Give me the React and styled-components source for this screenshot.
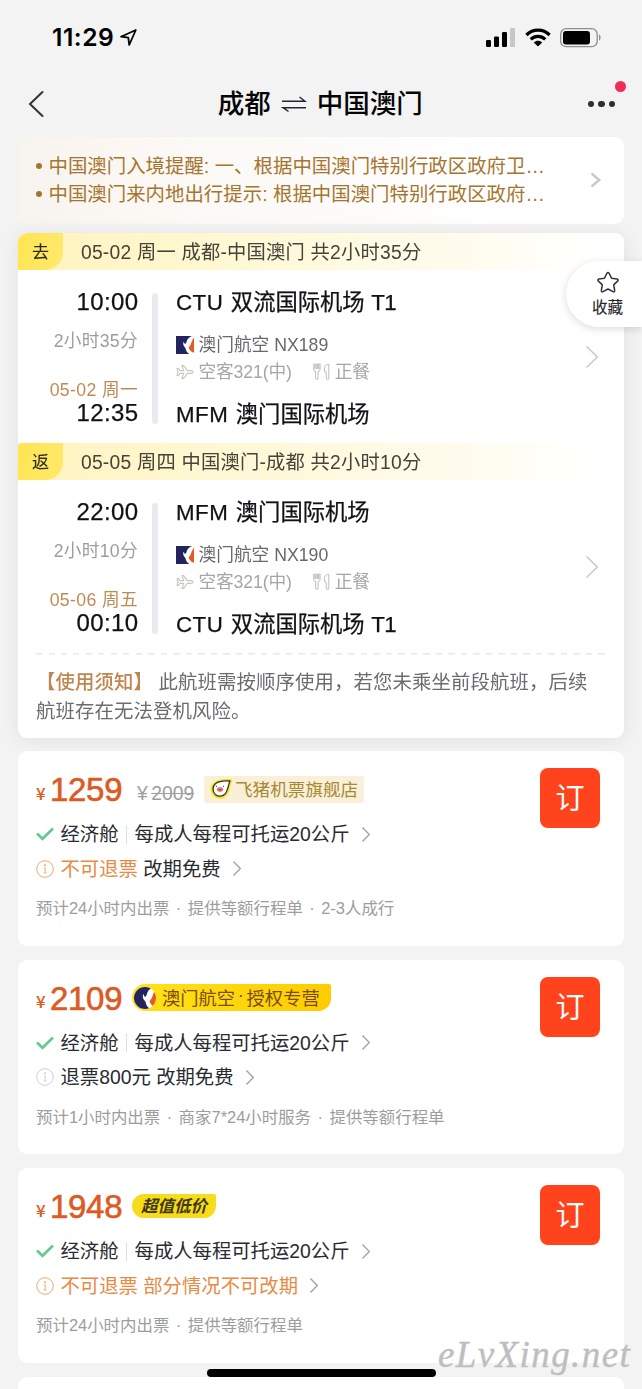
import React from 'react';
import styled, { createGlobalStyle, css } from 'styled-components';

const Global = createGlobalStyle`
  * { box-sizing: border-box; }
  body {
    margin: 0;
    background: #f3f3f3;
    font-family: "Liberation Sans", "Noto Sans CJK SC", sans-serif;
    color: #17191f;
    overflow: hidden;
  }
  svg { display: block; flex: none; overflow: visible; }
`;

const Screen = styled.div`
  position: relative;
  width: 642px;
  height: 1389px;
  overflow: hidden;
  background: #f3f3f3;
  white-space: nowrap;
`;

const StatusBar = styled.header`
  display: flex;
  align-items: center;
  justify-content: space-between;
  height: 74px;
  padding: 0 41px 0 52px;
`;

const Clock = styled.div`
  display: flex;
  align-items: center;
  gap: 6px;
  font: 600 24.6px/30px Inter, sans-serif;
  letter-spacing: 0.5px;
  color: #000;
`;

const StatusIcons = styled.div`
  display: flex;
  align-items: center;
  gap: 9px;
`;

const NavBar = styled.nav`
  display: flex;
  align-items: center;
  justify-content: space-between;
  height: 60px;
  margin-bottom: 3px;
  padding: 0 27px 0 28px;
`;

const Title = styled.h1`
  display: flex;
  align-items: center;
  gap: 10px;
  margin: 0 0 0 9px;
  font-size: 26.5px;
  line-height: 40px;
  font-weight: 500;
  color: #050505;
`;

const More = styled.button`
  position: relative;
  display: flex;
  gap: 4px;
  padding: 0;
  border: 0;
  background: none;
`;

const Dot = styled.i`
  width: 6.5px;
  height: 6.5px;
  border-radius: 50%;
  background: #2f2d31;
`;

const UnreadDot = styled.i`
  position: absolute;
  right: -10.5px;
  top: -19.5px;
  width: 11px;
  height: 11px;
  border-radius: 50%;
  background: #f22d55;
`;

const Alerts = styled.section`
  display: flex;
  align-items: center;
  justify-content: space-between;
  height: 87px;
  margin: 0 18px;
  padding: 0 24px 1px 18px;
  border-radius: 9px;
  background: linear-gradient(90deg, #f7f4ef 0, #fbf8f4 18%, #fdfcfa 60%, #fff 78%);
`;

const AlertList = styled.ul`
  margin: 0;
  padding: 0;
  list-style: none;
`;

const AlertItem = styled.li`
  display: flex;
  align-items: center;
  gap: 6.5px;
  font-size: 19.4px;
  line-height: 28px;
  letter-spacing: 0.03px;
  color: #a5752f;
  &::before {
    content: "";
    width: 6px;
    height: 6px;
    border-radius: 50%;
    background: #a5752f;
  }
`;

const Trip = styled.section`
  margin: 9px 18px 13px;
  height: 505px;
  border-radius: 9px;
  background: #fff;
  overflow: hidden;
`;

const TripFrame = styled.div`
  border-radius: 9px;
  filter: drop-shadow(0 2px 9px rgba(0, 0, 0, 0.07));
`;

const SegmentHead = styled.h2`
  display: flex;
  align-items: center;
  gap: 18px;
  height: 37px;
  margin: 0;
  font-size: 19.3px;
  line-height: 36px;
  letter-spacing: 0.21px;
  font-weight: 400;
  color: #45433a;
  background: linear-gradient(90deg, #fff3bd 0, #fff8d4 35%, #fffbea 68%, #fff 97%);
`;

const SegmentTitle = styled.span`
  padding-top: 2px;
`;

const Direction = styled.span`
  display: flex;
  align-items: center;
  justify-content: center;
  width: 45px;
  height: 37px;
  padding-top: 2px;
  border-radius: ${(p) => (p.$first ? '9px' : '4px')} 0 18px 0;
  background: linear-gradient(105deg, #ffe552, #ffe96d);
  font-size: 17px;
  font-weight: 400;
  -webkit-text-stroke: 0.1px #2d2b1c;
  color: #2d2b1c;
`;

const SegmentBody = styled.div`
  display: flex;
  height: 173px;
  padding: 19px 26px 0 0;
`;

const Times = styled.div`
  display: flex;
  flex-direction: column;
  align-items: flex-end;
  width: 120px;
`;

const Time = styled.div`
  height: 27px;
  font-size: 24px;
  line-height: 26px;
  letter-spacing: 0.4px;
  margin-right: -0.5px;
  -webkit-text-stroke: 0.25px #101116;
  color: #101116;
`;

const Duration = styled.div`
  height: 24px;
  margin: 13px 0 25px;
  font-size: 17.7px;
  line-height: 24px;
  letter-spacing: 0.3px;
  color: #9c9da0;
`;

const ArriveDate = styled.div`
  height: 22px;
  font-size: 17.7px;
  line-height: 24px;
  letter-spacing: 0.35px;
  color: #bf8b54;
`;

const Rail = styled.i`
  width: 6px;
  height: 131px;
  margin: 4px 18px 0 14px;
  border-radius: 3px;
  background: #e9eaef;
`;

const Places = styled.div`
  flex: 1;
`;

const Airport = styled.div`
  display: flex;
  gap: 7.500px;
  height: 28px;
  font-size: 22.3px;
  line-height: 27px;
  -webkit-text-stroke: 0.25px #101116;
  color: #101116;
`;

const AirportCode = styled.span`
  letter-spacing: 0.5px;
`;

const Terminal = styled.span`
  margin-left: -1px;
  letter-spacing: -0.5px;
`;

const Airline = styled.div`
  display: flex;
  align-items: center;
  gap: 4.500px;
  height: 27px;
  margin-top: 14px;
  font-size: 17.7px;
  line-height: 28px;
  color: #68696d;
`;

const Details = styled.div`
  display: flex;
  align-items: center;
  gap: 4.500px;
  height: 27px;
  margin-bottom: 16px;
  font-size: 17.7px;
  line-height: 28px;
  letter-spacing: -0.15px;
  color: #a5a6a8;
  svg + span + svg { margin-left: 17px; }
`;

const GoTo = styled.div`
  display: flex;
  align-items: center;
  height: 136px;
`;

const Notice = styled.p`
  margin: 0 18px;
  padding: 14.500px 15px 0 0;
  font-size: 19.4px;
  line-height: 29.5px;
  letter-spacing: 0.11px;
  white-space: normal;
  color: #6b6c70;
  background: repeating-linear-gradient(90deg, #e8e8ec 0 6px, transparent 6px 12.5px) 0 0 / 100% 1.5px no-repeat;
`;

const NoticeTitle = styled.b`
  font-weight: 500;
  color: #bf8650;
`;

const Offer = styled.article`
  display: flex;
  justify-content: space-between;
  height: 194.5px;
  margin: 0 18px 14px;
  padding: 17px 24px 0 18px;
  border-radius: 9px;
  background: #fff;
`;

const PriceRow = styled.div`
  display: flex;
  align-items: center;
  height: 44px;
  margin-bottom: 5px;
`;

const Currency = styled.span`
  width: 14px;
  padding-top: 5px;
  font: 500 17px/20px "Noto Sans CJK SC", sans-serif;
  color: #dd5a22;
`;

const Price = styled.span`
  width: 73px;
  font-size: 33px;
  line-height: 44px;
  letter-spacing: -0.3px;
  -webkit-text-stroke: 0.6px #dd5a22;
  color: #dd5a22;
`;

const OldPrice = styled.span`
  display: flex;
  gap: 3.500px;
  align-items: center;
  width: 67px;
  margin-left: 14px;
  padding-top: 7px;
  font-size: 19.3px;
  line-height: 24px;
  color: #9d9ea1;
`;

const Badge = styled.span`
  display: flex;
  align-items: center;
  margin-bottom: 2px;
  ${(p) => p.$kind === 'shop' && css`
    gap: 3px;
    width: 160px;
    height: 27px;
    padding-left: 6px;
    border-radius: 3px;
    background: #faf0d9;
    font-size: 17.6px;
    color: #a68a35;
  `}
  ${(p) => p.$kind === 'airline' && css`
    gap: 6px;
    width: 199px;
    height: 27px;
    margin-left: 9px;
    padding-left: 2px;
    border-radius: 14px 2px 13px 14px;
    background: linear-gradient(90deg, #ffe21a, #fc0);
    font-size: 18.3px;
    color: #7a4c0c;
  `}
  ${(p) => p.$kind === 'value' && css`
    justify-content: center;
    width: 84px;
    height: 24px;
    margin-left: 9px;
    border-radius: 13px 2px 13px 13px;
    background: #f7dc1b;
    font-size: 16.5px;
    font-weight: 700;
    font-style: italic;
    color: #40380a;
  `}
`;

const BadgeLabel = styled.span`
  display: flex;
  gap: 2.700px;
  padding-bottom: 2px;
`;

const Rule = styled.div`
  display: flex;
  align-items: center;
  height: 34.5px;
  font-size: 19.35px;
  line-height: 34px;
  color: #292b31;
  > svg:first-child { margin-right: 6.5px; }
  > svg:last-child { margin-left: 12px; }
`;

const Warn = styled.span`
  color: #e78a43;
`;

const Divider = styled.i`
  width: 1px;
  height: 19px;
  margin: 0 8px 0 7px;
  background: #dedfe2;
`;

const Meta = styled.div`
  margin-top: 10px;
  font-size: 16.45px;
  line-height: 24px;
  word-spacing: 1.9px;
  color: #9c9da0;
`;

const BookButton = styled.button`
  width: 60px;
  height: 60px;
  padding: 0 0 3px;
  border: 0;
  border-radius: 8px;
  background: #ff431c;
  font: 400 29px/57px "Noto Sans CJK SC", sans-serif;
  color: #fff;
`;

const Favorite = styled.button`
  position: absolute;
  right: 0;
  top: 261px;
  display: flex;
  flex-direction: column;
  align-items: center;
  gap: 1px;
  width: 76px;
  height: 66px;
  padding: 10px 0 0 7px;
  border: 0;
  border-radius: 33px 0 0 33px;
  background: #fff;
  box-shadow: 0 2px 9px rgba(0, 0, 0, 0.14);
  font: 400 15.5px/24px "Liberation Sans", "Noto Sans CJK SC", sans-serif;
  -webkit-text-stroke: 0.15px #25272d;
  color: #25272d;
`;

const HomeIndicator = styled.div`
  position: absolute;
  left: 207px;
  top: 1369px;
  width: 229px;
  height: 8px;
  border-radius: 4px;
  background: #000;
`;

const Watermark = styled.div`
  position: absolute;
  left: 438px;
  top: 1334px;
  font: italic 400 37px/42px "Liberation Serif", serif;
  letter-spacing: 1.4px;
  -webkit-text-stroke: 0.4px #bebebe;
  color: #bebebe;
`;

const Chevron = ({ w = 8, h = 15, color = '#a4a5a8', stroke = 1.4 }) => (
  <svg width={w} height={h} viewBox={`0 0 ${w} ${h}`} fill="none" stroke={color} strokeWidth={stroke}>
    <path d={`M.5 .5 ${w - 0.7} ${h / 2} .5 ${h - 0.5}`} />
  </svg>
);

const LogoClip = styled.svg`
  && { overflow: hidden; }
  border-radius: ${(p) => (p.$round ? '50%' : '0')};
`;

const AirMacau = ({ round, size = 18 }) => (
  <LogoClip $round={round} width={size} height={size} viewBox="0 0 18 18">
    <path fill="#fff" d="M0 0h18v18H0z" />
    <path fill="#23245f" d="M0 0h15.800c-3.200 1.300-5 3.600-5.400 6.600L9 8.300 7.600 5.800c-.6 1.500-.4 3 .2 4.300l1.600 2c.5 2.600 1.600 4.500 3.800 5.900H0z" />
    <path fill="#e75b23" d="M18 1.600v15.200c-3-1-5-3.200-5.300-5.600 2.400-1.400 2.400-5.800 5.300-9.600z" />
  </LogoClip>
);

const PlaneIcon = () => (
  <svg width="18" height="16" viewBox="0 0 18 16" fill="none" stroke="#c3c8bf" strokeWidth="1.1" strokeLinejoin="round">
    <path d="M17 8c0-.8-.8-1.400-2-1.400h-3.700L7.600 1.600H6l1.700 5H4L2.500 4.500H1L2 8l-1 3.500h1.500L4 9.400h3.700l-1.700 5h1.600l3.700-5H15c1.200 0 2-.6 2-1.400z" />
  </svg>
);

const MealIcon = () => (
  <svg width="17" height="17" viewBox="0 0 17 17" fill="none" stroke="#c3c5bd" strokeWidth="1.1" strokeLinejoin="round">
    <path d="M.7 1v5.300c0 1.500 1 2.200 1.900 2.500v6.500c0 1.200 2.500 1.200 2.500 0V8.800C6.200 8.400 7.100 7.700 7.100 6.300V1H5.700v5M3.200 1v5M4.600 1v5M2 1v5M.7 1H2M3.200 1h1.400" />
    <path d="M15.800 15.300V1.200c-2.600 0-4.500 2.300-4.500 5 0 2 .7 3.200 2 3.500v5.600c0 1.300 2.500 1.300 2.500 0z" />
  </svg>
);

const CheckIcon = () => (
  <svg width="18" height="14" viewBox="0 0 18 14" fill="none" stroke="#67c893" strokeWidth="2.700">
    <path d="M1 6.500 6.500 11.800 17 1.500" />
  </svg>
);

const InfoIcon = ({ color }) => (
  <svg width="18" height="18" viewBox="0 0 18 18" fill="none" stroke={color} strokeWidth="1">
    <circle cx="9" cy="9" r="8.300" />
    <path d="M8 7.800h1.200v5M7.800 12.900h2.700" />
    <circle cx="9" cy="5.200" r=".6" fill={color} />
  </svg>
);

const FliggyIcon = () => (
  <svg width="22" height="20" viewBox="0 0 22 20">
    <path d="M20.500 1.500C15 1.200 9.500 1 5 4.300 1 7.400 1.200 13 4.500 16.200c3.300 3 8.600 2.600 11.500-.8 2.800-3.400 2.300-8 4.500-13.900z" fill="#fff" stroke="#f7e51b" strokeWidth="3" strokeLinejoin="round" />
    <path d="M20 2C15 1.500 9.500 1.500 5.600 4.500c-3.400 2.900-3.300 8-.3 10.900 3 2.600 7.500 2.200 10.100-.8C18 11.400 17.700 7.500 20 2z" fill="#fff" stroke="#37351e" strokeWidth="1.300" strokeLinejoin="round" />
    <ellipse cx="10" cy="10.500" rx="3.200" ry="2.400" fill="#ee8088" />
    <path d="M9 10v1.200M11 10v1.200M6 7.200h1M13 7.200h1" stroke="#5e2026" strokeWidth="1.100" />
  </svg>
);

const SwapIcon = () => (
  <svg width="26" height="16" viewBox="0 0 26 16" fill="none" stroke="#25262a" strokeWidth="1.400">
    <path d="M1 5.300h23L18.500 1M25 11.700H2L7.500 15.500" />
  </svg>
);

const CTU = ['CTU', '双流国际机场', 'T1'];
const MFM = ['MFM', '澳门国际机场'];

const flights = [
  { tag: '去', head: '05-02 周一 成都-中国澳门 共2小时35分', dep: '10:00', dur: '2小时35分', date: '05-02 周一', arr: '12:35', from: CTU, to: MFM, no: 'NX189' },
  { tag: '返', head: '05-05 周四 中国澳门-成都 共2小时10分', dep: '22:00', dur: '2小时10分', date: '05-06 周五', arr: '00:10', from: MFM, to: CTU, no: 'NX190' },
];

const offers = [
  { price: '1259', old: '2009', kind: 'shop', label: ['飞猪机票旗舰店'], warn: '不可退票', rule: ' 改期免费', meta: '预计24小时内出票 · 提供等额行程单 · 2-3人成行' },
  { price: '2109', kind: 'airline', label: ['澳门航空', '·', '授权专营'], rule: '退票800元 改期免费', meta: '预计1小时内出票 · 商家7*24小时服务 · 提供等额行程单' },
  { price: '1948', kind: 'value', label: ['超值低价'], warn: '不可退票 部分情况不可改期', meta: '预计24小时内出票 · 提供等额行程单' },
];

const AirportName = ({ place: [code, name, terminal] }) => (
  <Airport>
    <AirportCode>{code}</AirportCode>
    <span>{name}</span>
    {terminal && <Terminal>{terminal}</Terminal>}
  </Airport>
);

const FlightSegment = ({ f, first }) => (
  <>
    <SegmentHead>
      <Direction $first={first}>{f.tag}</Direction>
      <SegmentTitle>{f.head}</SegmentTitle>
    </SegmentHead>
    <SegmentBody>
      <Times>
        <Time>{f.dep}</Time>
        <Duration>{f.dur}</Duration>
        <ArriveDate>{f.date}</ArriveDate>
        <Time>{f.arr}</Time>
      </Times>
      <Rail />
      <Places>
        <AirportName place={f.from} />
        <Airline><AirMacau /><span>澳门航空 {f.no}</span></Airline>
        <Details><PlaneIcon /><span>空客321(中)</span><MealIcon /><span>正餐</span></Details>
        <AirportName place={f.to} />
      </Places>
      <GoTo><Chevron w={12} h={22} color="#c9cacc" stroke={1.6} /></GoTo>
    </SegmentBody>
  </>
);

const OfferCard = ({ o }) => (
  <Offer>
    <div>
      <PriceRow>
        <Currency>¥</Currency>
        <Price>{o.price}</Price>
        {o.old && <OldPrice>¥ <s>{o.old}</s></OldPrice>}
        <Badge $kind={o.kind}>
          {o.kind === 'shop' && <FliggyIcon />}
          {o.kind === 'airline' && <AirMacau round size={22} />}
          <BadgeLabel>{o.label.map((t) => <span key={t}>{t}</span>)}</BadgeLabel>
        </Badge>
      </PriceRow>
      <Rule>
        <CheckIcon />
        <span>经济舱</span>
        <Divider />
        <span>每成人每程可托运20公斤</span>
        <Chevron />
      </Rule>
      <Rule>
        <InfoIcon color={o.warn ? '#eda877' : '#cfd0d2'} />
        <span>{o.warn && <Warn>{o.warn}</Warn>}{o.rule}</span>
        <Chevron />
      </Rule>
      <Meta>{o.meta}</Meta>
    </div>
    <BookButton>订</BookButton>
  </Offer>
);

export default function App() {
  return (
    <Screen>
      <Global />
      <StatusBar>
        <Clock>
          11:29
          <svg width="17" height="17" viewBox="0 0 17 17" fill="none" stroke="#000" strokeWidth="1.800" strokeLinejoin="round">
            <path d="M15.800 1 1 7.700l7.300 1 .9 7.300z" />
          </svg>
        </Clock>
        <StatusIcons>
          <svg width="30" height="19" viewBox="0 0 30 19">
            <rect x="0" y="12" width="5" height="7" rx="1.200" />
            <rect x="8" y="8.500" width="5" height="10.500" rx="1.200" />
            <rect x="16" y="4" width="5" height="15" rx="1.200" />
            <rect x="24" y="0" width="5" height="19" rx="1.200" fill="#c7c7c7" />
          </svg>
          <svg width="26" height="19" viewBox="0 0 26 19" fill="none" stroke="#000" strokeWidth="3.300">
            <path d="M1.400 7c6.600-6.600 16.600-6.600 23.200 0M5.700 11.400c4.200-4 10.400-4 14.600 0" />
            <path d="M13 18.500 8.800 14.400c2.500-2.200 5.900-2.200 8.400 0z" fill="#000" stroke="none" />
          </svg>
          <svg width="41" height="19" viewBox="0 0 41 19">
            <rect x=".7" y=".7" width="36.500" height="18" rx="5.500" fill="none" stroke="#8f8f8f" strokeWidth="1.300" />
            <rect x="3" y="3" width="27" height="13.500" rx="3" />
            <path d="M39 6.500c2.200.8 2.200 5 0 6z" fill="#8f8f8f" />
          </svg>
        </StatusIcons>
      </StatusBar>
      <NavBar>
        <svg width="16" height="26" viewBox="0 0 16 26" fill="none" stroke="#323238" strokeWidth="2" strokeLinecap="round">
          <path d="M14.500 1 2 13 14.500 25" />
        </svg>
        <Title>成都 <SwapIcon /> 中国澳门</Title>
        <More><Dot /><Dot /><Dot /><UnreadDot /></More>
      </NavBar>
      <Alerts>
        <AlertList>
          <AlertItem>中国澳门入境提醒: 一、根据中国澳门特别行政区政府卫…</AlertItem>
          <AlertItem>中国澳门来内地出行提示: 根据中国澳门特别行政区政府…</AlertItem>
        </AlertList>
        <Chevron w={9} h={14} color="#c9c9cb" stroke={2.4} />
      </Alerts>
      <TripFrame>
        <Trip>
          {flights.map((f, i) => <FlightSegment key={f.no} f={f} first={i === 0} />)}
          <Notice><NoticeTitle>【使用须知】</NoticeTitle> 此航班需按顺序使用，若您未乘坐前段航班，后续航班存在无法登机风险。</Notice>
        </Trip>
      </TripFrame>
      {offers.map((o) => <OfferCard key={o.price} o={o} />)}
      <Offer />
      <Favorite>
        <svg width="24" height="24" viewBox="0 0 24 24" fill="none" stroke="#34363c" strokeWidth="1.500" strokeLinejoin="round">
          <path d="M12 1.500c.5 0 .8.300 1 .7l2.500 5 5.600.8c1 .2 1.400 1.200.7 1.900l-4.100 4 1 5.600c.2 1-.8 1.700-1.700 1.200L12 18l-5 2.700c-.9.500-1.900-.2-1.700-1.200l1-5.600-4.100-4c-.7-.7-.3-1.700.7-1.900l5.600-.8 2.500-5c.2-.4.500-.7 1-.7z" />
        </svg>
        收藏
      </Favorite>
      <Watermark>eLvXing.net</Watermark>
      <HomeIndicator />
    </Screen>
  );
}
